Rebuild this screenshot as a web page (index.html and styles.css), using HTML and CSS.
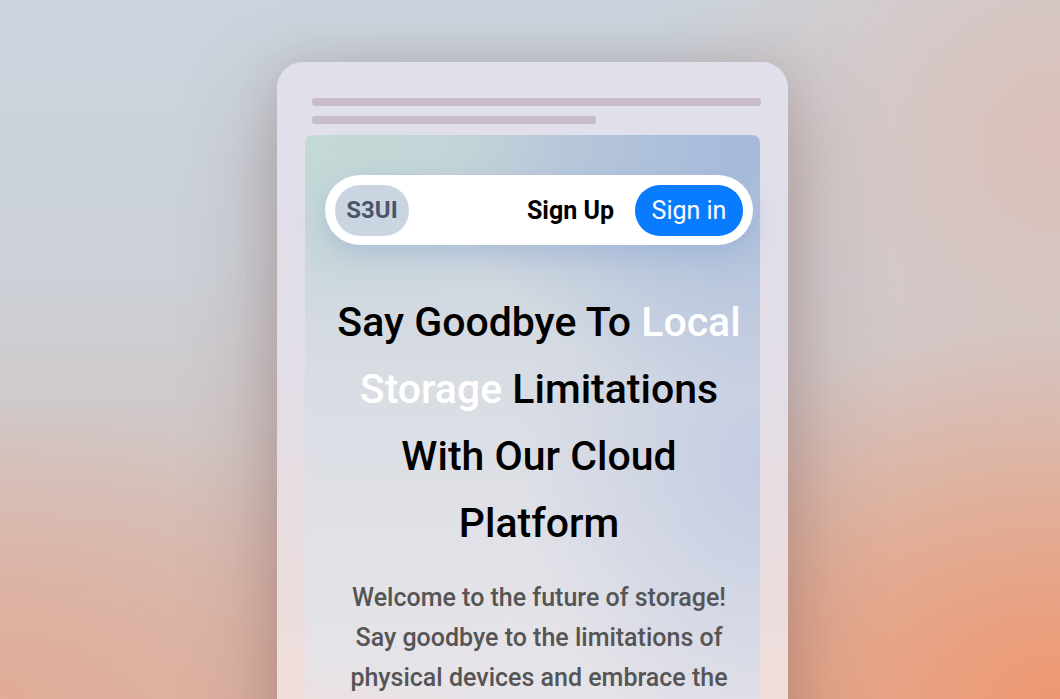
FILE: index.html
```html
<!DOCTYPE html>
<html lang="en">
<head>
<meta charset="utf-8">
<title>S3UI</title>
<link rel="stylesheet" href="styles.css">
</head>
<body>
<div class="stage">
  <div class="phone">
    <div class="skeleton">
      <div class="bar bar-long"></div>
      <div class="bar bar-short"></div>
    </div>
    <div class="screen">
      <nav class="nav">
        <div class="logo">S3UI</div>
        <div class="nav-actions">
          <a class="signup">Sign Up</a>
          <a class="signin">Sign in</a>
        </div>
      </nav>
      <h1 class="headline">Say Goodbye To <span class="hl">Local Storage</span> Limitations With Our Cloud Platform</h1>
      <p class="lead">Welcome to the future of storage! Say goodbye to the limitations of physical devices and embrace the freedom of the cloud.</p>
    </div>
  </div>
</div>
</body>
</html>
```
FILE: styles.css
```css
* { box-sizing: border-box; }
html, body { margin: 0; padding: 0; height: 100%; }
body {
  overflow: hidden;
  font-family: Roboto, "Liberation Sans", sans-serif;
  background:
    radial-gradient(ellipse 700px 500px at 100% 100%, rgba(240,150,110,0.95), rgba(240,150,110,0) 75%),
    radial-gradient(ellipse 520px 520px at 100% 20%, rgba(222,188,178,0.85), rgba(222,188,178,0) 80%),
    radial-gradient(ellipse 600px 400px at 0% 100%, rgba(225,170,150,0.9), rgba(225,170,150,0) 75%),
    linear-gradient(180deg, #cbd5de 0%, #ccd0d7 40%, #d9b8aa 100%);
  background-color: #cfd6de;
}
.stage {
  display: flex;
  justify-content: center;
  padding-top: 62px;
  padding-left: 5px;
  height: 100%;
}
.phone {
  width: 511px;
  height: 720px;
  flex-shrink: 0;
  border-radius: 26px 26px 0 0;
  background: linear-gradient(180deg, #e0e0ec 0%, #e2dde6 45%, #f3ddd6 100%);
  box-shadow: 0 30px 90px rgba(120, 70, 65, 0.38), 0 0 40px rgba(120, 100, 110, 0.15);
  padding: 36px 27px 0 28px;
}
.skeleton {
  padding-left: 7px;
  display: flex;
  flex-direction: column;
  gap: 10px;
}
.bar {
  height: 8px;
  border-radius: 3px;
  background: #c9bdcb;
}
.bar-long { width: 449px; }
.bar-short { width: 284px; }
.screen {
  margin-top: 11px;
  width: 455px;
  height: 700px;
  border-radius: 8px 8px 0 0;
  padding: 40px 7px 0 20px;
  background:
    radial-gradient(ellipse 260px 200px at 0% 0%, rgba(196,218,214,1), rgba(196,218,214,0) 100%),
    radial-gradient(ellipse 320px 260px at 100% 0%, rgba(164,184,219,1), rgba(164,184,219,0) 100%),
    radial-gradient(ellipse 240px 300px at 100% 48%, rgba(190,200,225,0.8), rgba(190,200,225,0) 100%),
    radial-gradient(ellipse 260px 180px at 0% 100%, rgba(246,216,208,1), rgba(246,216,208,0) 100%),
    linear-gradient(180deg, #c2d0d8 0%, #d6dbe2 30%, #e2e2e8 60%, #ebe6ea 100%);
}
.nav {
  display: flex;
  align-items: center;
  justify-content: space-between;
  height: 70px;
  padding: 10px;
  background: #ffffff;
  border-radius: 35px;
  box-shadow: 0 10px 28px rgba(140, 165, 210, 0.45);
}
.logo {
  width: 74px;
  height: 51px;
  border-radius: 25px;
  background: #cad5e1;
  color: #4a5568;
  font-weight: 700;
  font-size: 24px;
  display: flex;
  align-items: center;
  justify-content: center;
}
.nav-actions {
  display: flex;
  align-items: center;
  gap: 21px;
}
.signup {
  color: #000;
  font-weight: 700;
  font-size: 25px;
}
.signin {
  width: 108px;
  height: 51px;
  border-radius: 25px;
  background: #087bff;
  color: #fff;
  font-size: 25px;
  display: flex;
  align-items: center;
  justify-content: center;
}
.headline {
  margin: 44px 0 0;
  text-align: center;
  font-size: 41px;
  font-weight: 500;
  line-height: 67px;
  color: #000;
}
.hl { color: #fff; }
.lead {
  margin: 21px 0 0;
  padding: 0 12px;
  text-align: center;
  font-size: 25px;
  font-weight: 500;
  line-height: 40px;
  color: #555555;
}
```
